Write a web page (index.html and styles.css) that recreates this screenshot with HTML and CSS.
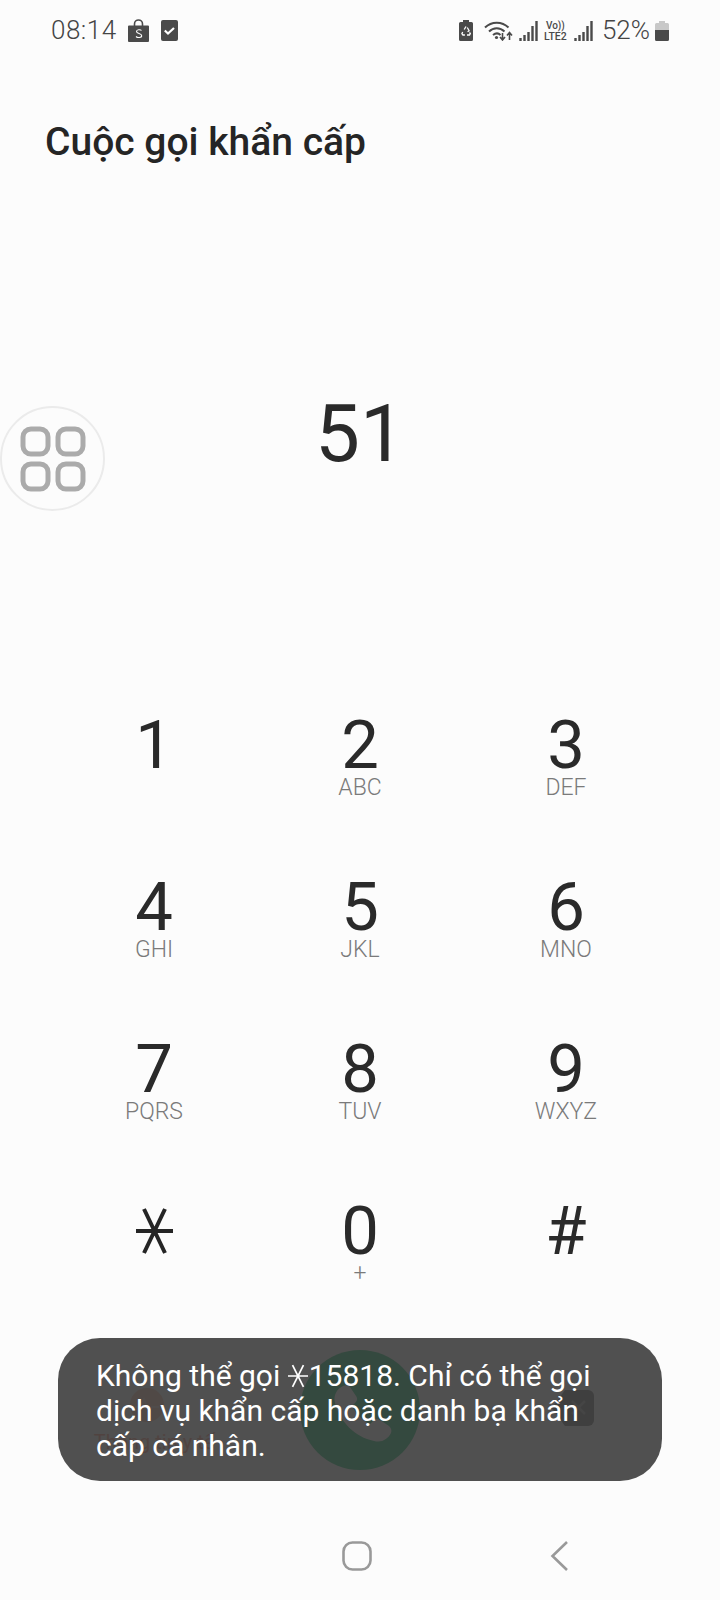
FILE: index.html
```html
<!DOCTYPE html>
<html lang="vi">
<head>
<meta charset="utf-8">
<title>Cuộc gọi khẩn cấp</title>
<link rel="stylesheet" href="styles.css">
</head>
<body>
<div class="phone">
  <div class="status">
    <div class="status-left">
      <span class="time">08:14</span>
      <svg class="ic-bag" viewBox="0 0 21 23"><path d="M6.500 7V5a4 4 0 0 1 8 0v2" fill="none" stroke="#4a4a4a" stroke-width="1.600"/><path d="M1 6.500h19a1 1 0 0 1 1 1V22a1 1 0 0 1-1 1H1a1 1 0 0 1-1-1V7.500a1 1 0 0 1 1-1z" fill="#4a4a4a"/><path d="M13.500 11.500c-.8-1-4.900-1.300-5 1 0 2.500 5.200 1.600 5.200 4.200 0 2.300-4.300 2.200-5.700.8" fill="none" stroke="#fff" stroke-width="1.100"/></svg>
      <svg class="ic-check" viewBox="0 0 17 22"><rect y="0" width="17" height="21" rx="2" fill="#4a4a4a"/><path d="M3.800 10.500l3.200 3 6-5.500" fill="none" stroke="#fff" stroke-width="2.200"/></svg>
    </div>
    <div class="status-right">
      <svg class="ic-batt" viewBox="0 0 14 21"><path d="M4 0h6v2h2.500a1.500 1.500 0 0 1 1.500 1.500V19.500a1.500 1.500 0 0 1-1.500 1.500h-11A1.500 1.500 0 0 1 0 19.500V3.500A1.500 1.500 0 0 1 1.500 2H4z" fill="#4a4a4a"/><path d="M7 6.500l-1.800 3M8.300 7.500l1.800 3.200-1.500 1M3.700 12l-.8 1.600 1 1.400h2M8 15h2.500l.8-1.500-.8-1" fill="none" stroke="#fff" stroke-width="1.300"/></svg>
      <svg class="ic-wifi" viewBox="0 0 29 21"><path d="M1 7.500C7.500 1 18 1 24.500 7.500M5 11.500c4.500-4.300 11-4.300 15.500 0M9 15c2.500-2 5.500-2 7.500 0" fill="none" stroke="#4a4a4a" stroke-width="2"/><circle cx="12.500" cy="17.500" r="1.600" fill="#4a4a4a"/><path d="M18.500 13v6.500M16 17l2.500 3 2.500-3M25.500 20v-7M23 15.500l2.500-3 2.500 3" fill="none" stroke="#4a4a4a" stroke-width="1.600"/></svg>
      <svg class="ic-signal" viewBox="0 0 19 20"><path d="M1.500 20v-3M5.500 20v-6M9.500 20v-9M13.500 20V5M17.500 20V0" stroke="#4a4a4a" stroke-width="2.400" fill="none"/></svg>
      <span class="volte"><span class="vo">Vo))</span><span class="lte">LTE2</span></span>
      <svg class="ic-signal" viewBox="0 0 19 20"><path d="M1.500 20v-3M5.500 20v-6M9.500 20v-9M13.500 20V5M17.500 20V0" stroke="#4a4a4a" stroke-width="2.400" fill="none"/></svg>
      <span class="pct">52%</span>
      <svg class="ic-level" viewBox="0 0 14 20"><path d="M4 0h6v2h2.500A1.500 1.500 0 0 1 14 3.500V9H0V3.500A1.500 1.500 0 0 1 1.500 2H4z" fill="#c8c8c8"/><path d="M0 9h14v9.500a1.500 1.500 0 0 1-1.500 1.500h-11A1.500 1.500 0 0 1 0 18.500z" fill="#4a4a4a"/></svg>
    </div>
  </div>

  <h1 class="title">Cuộc gọi khẩn cấp</h1>
  <div class="number">51</div>

  <div class="keypad">
    <div class="key"><span class="digit">1</span><span class="sub"></span></div>
    <div class="key"><span class="digit">2</span><span class="sub">ABC</span></div>
    <div class="key"><span class="digit">3</span><span class="sub">DEF</span></div>
    <div class="key"><span class="digit">4</span><span class="sub">GHI</span></div>
    <div class="key"><span class="digit">5</span><span class="sub">JKL</span></div>
    <div class="key"><span class="digit">6</span><span class="sub">MNO</span></div>
    <div class="key"><span class="digit">7</span><span class="sub">PQRS</span></div>
    <div class="key"><span class="digit">8</span><span class="sub">TUV</span></div>
    <div class="key"><span class="digit">9</span><span class="sub">WXYZ</span></div>
    <div class="key"><span class="digit"><svg class="star" viewBox="0 0 37 46"><path d="M0 23h37M8 1l21 44M29 1L8 45" fill="none" stroke="#252525" stroke-width="4"/></svg></span><span class="sub"></span></div>
    <div class="key"><span class="digit">0</span><span class="sub">+</span></div>
    <div class="key"><span class="digit">#</span><span class="sub"></span></div>
  </div>

  <div class="actions">
    <div class="act-left">
      <svg class="red-dot" viewBox="0 0 34 34"><circle cx="17" cy="17" r="17" fill="#ffd5c5"/><path d="M5 19h6l3-8 5 13 3-5h7" fill="none" stroke="#ffeae4" stroke-width="2"/></svg>
      <span class="act-label">Thông tin y tế</span>
    </div>
    <svg class="call" viewBox="0 0 120 124"><circle cx="60" cy="62" r="60" fill="#66d59e"/><path d="M43 38c-6 3-10 9-8 17 5 19 20 34 39 38 8 2 14-2 17-8 1-3 0-5-2-7l-9-6c-3-2-5-1-7 1l-3 3c-8-4-14-10-18-18l3-3c2-2 3-4 1-7l-6-9c-2-2-4-2-7-1z" fill="#fff"/></svg>
    <svg class="del" viewBox="0 0 42 36"><path d="M13 0h23a6 6 0 0 1 6 6v24a6 6 0 0 1-6 6H13L0 18z" fill="#9e9e9e"/><path d="M20 11l13 13M33 11L20 24" fill="none" stroke="#c4c4c4" stroke-width="2.500"/></svg>
  </div>

  <div class="nav">
    <svg class="nav-home" viewBox="0 0 30 30"><rect x="1.500" y="1.500" width="27" height="27" rx="9" fill="none" stroke="#999" stroke-width="2.600"/></svg>
    <svg class="nav-back" viewBox="0 0 18 30"><path d="M17 1L2.500 15 17 29" fill="none" stroke="#999" stroke-width="2.600"/></svg>
  </div>

  <div class="float-btn">
    <svg viewBox="0 0 66 66" class="float-ic"><g fill="none" stroke="#ababab" stroke-width="5"><rect x="3" y="3" width="25" height="25" rx="8"/><rect x="38" y="3" width="25" height="25" rx="8"/><rect x="3" y="38" width="25" height="25" rx="8"/><rect x="38" y="38" width="25" height="25" rx="8"/></g></svg>
  </div>

  <div class="toast">Không thể gọi <svg class="toast-star" viewBox="0 0 22 26"><path d="M0 13h22M5 1l12 24M17 1L5 25" fill="none" stroke="#fff" stroke-width="1.900"/></svg>15818. Chỉ có thể gọi dịch vụ khẩn cấp hoặc danh bạ khẩn cấp cá nhân.</div>
</div>
</body>
</html>
```

FILE: styles.css
```css
* { box-sizing: border-box; }
html, body { margin: 0; padding: 0; }
body { background: #fcfcfc; font-family: Roboto, "Noto Sans", sans-serif; color: #252525; }
.phone { position: relative; width: 720px; height: 1600px; overflow: hidden; display: flex; flex-direction: column; background: #fcfcfc; }

.status { height: 62px; padding: 19px 51px 0 51px; display: flex; justify-content: space-between; align-items: flex-start; }
.status-left { display: flex; align-items: center; height: 23px; }
.time { font-size: 26px; font-weight: 300; color: #444; line-height: 23px; letter-spacing: .5px; }
.ic-bag { width: 21px; height: 23px; margin-left: 11px; }
.ic-check { width: 17px; height: 22px; margin-left: 12px; }
.status-right { display: flex; align-items: center; height: 23px; }
.ic-batt { width: 14px; height: 21px; margin-right: 1px; }
.ic-wifi { width: 29px; height: 21px; margin-left: 10px; }
.ic-signal { width: 19px; height: 20px; margin-left: 6px; }
.volte { display: flex; flex-direction: column; align-items: center; width: 25px; margin-left: 5px; color: #4a4a4a; font-weight: 500; line-height: 11px; }
.vo { font-size: 10px; }
.lte { font-size: 10.500px; }
.pct { font-size: 26px; font-weight: 300; color: #444; line-height: 23px; margin-left: 9px; margin-right: 2px; }
.ic-level { width: 14px; height: 20px; margin-left: 3px; }

.title { margin: 55px 0 0 45px; font-size: 39px; font-weight: 500; line-height: 50px; color: #252525; }

.number { margin-top: 219px; text-align: center; font-size: 80px; font-weight: 400; line-height: 96px; color: #2a2a2a; }

.keypad { margin: 230px 51px 0; display: grid; grid-template-columns: repeat(3, 206px); grid-auto-rows: 162px; }
.key { display: flex; flex-direction: column; align-items: center; }
.digit { height: 66px; display: flex; align-items: center; font-size: 67px; font-weight: 400; line-height: 66px; color: #2a2a2a; }
.sub { height: 26px; font-size: 23px; font-weight: 300; line-height: 26px; margin-top: -3px; color: #7a7a7a; }
.star { width: 37px; height: 46px; }

.actions { position: absolute; top: 1348px; left: 51px; width: 618px; display: grid; grid-template-columns: repeat(3, 206px); justify-items: center; align-items: start; }
.act-left { display: flex; flex-direction: column; align-items: center; padding-top: 40px; }
.red-dot { display: block; width: 34px; height: 34px; margin-right: 14px; }
.act-label { font-size: 20px; line-height: 24px; margin-top: 8px; color: #ffb8a8; white-space: nowrap; }
.call { display: block; width: 120px; height: 124px; }
.del { display: block; width: 42px; height: 36px; margin: 42px 0 0 14px; }

.nav { position: absolute; left: 0; right: 0; top: 1541px; height: 30px; display: grid; grid-template-columns: 457px 263px; align-items: center; }
.nav-home { width: 30px; height: 30px; margin-left: 342px; }
.nav-back { width: 18px; height: 30px; margin-left: 93px; }

.float-btn { position: absolute; left: 0; top: 406px; width: 105px; height: 105px; border-radius: 50%; border: 2px solid #ebebeb; background: #fcfcfc; display: flex; align-items: center; justify-content: center; }
.float-ic { width: 66px; height: 66px; }

.toast { position: absolute; left: 58px; top: 1338px; width: 604px; height: 143px; padding: 20px 60px 0 38px; border-radius: 42px; background: rgba(41, 41, 41, .82); color: #fff; font-size: 30px; line-height: 35px; }
.toast-star { display: inline-block; width: 20px; height: 24px; margin: 0 1px -2px 0; }
```
